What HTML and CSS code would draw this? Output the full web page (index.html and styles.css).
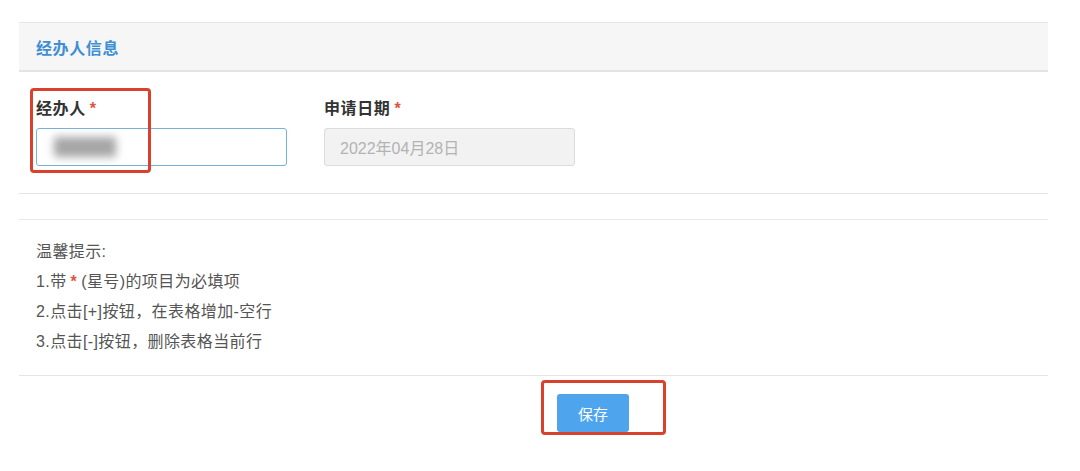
FILE: index.html
```html
<!DOCTYPE html>
<html lang="zh">
<head>
<meta charset="utf-8">
<title>经办人信息</title>
<link rel="stylesheet" href="styles.css">
</head>
<body>
<div class="page">
  <section class="panel">
    <div class="panel-head">经办人信息</div>
    <div class="panel-body">
      <div class="field">
        <div class="label">经办人<span class="req">*</span></div>
        <div class="input active"><span class="masked"></span></div>
        <div class="mark mark-field"></div>
      </div>
      <div class="field">
        <div class="label">申请日期<span class="req">*</span></div>
        <div class="input disabled">2022年04月28日</div>
      </div>
    </div>
  </section>

  <section class="tips">
    <p>温馨提示:</p>
    <p>1.带<span class="req">*</span>(星号)的项目为必填项</p>
    <p>2.点击[+]按钮，在表格增加-空行</p>
    <p>3.点击[-]按钮，删除表格当前行</p>
  </section>

  <div class="actions">
    <button class="btn-save">保存</button>
    <div class="mark mark-btn"></div>
  </div>
</div>
</body>
</html>
```

FILE: styles.css
```css
* { box-sizing: border-box; }
html, body {
  margin: 0;
  background: #ffffff;
  font-family: "Liberation Sans", "Noto Sans CJK SC", sans-serif;
  color: #333;
}
.page {
  padding: 22px 32px 0 19px;
}
.panel {
  border-top: 1px solid #e6e6e6;
  border-bottom: 1px solid #e4e4e4;
}
.panel-head {
  height: 49px;
  background: #f6f6f6;
  border-bottom: 2px solid #e3e3e3;
  padding-left: 17px;
  display: flex;
  align-items: center;
  font-size: 16px;
  font-weight: bold;
  letter-spacing: 0.6px;
  color: #3f8fd4;
}
.panel-body {
  display: flex;
  gap: 37px;
  padding: 27px 17px 27px;
}
.field {
  position: relative;
  width: 251px;
}
.label {
  font-size: 16px;
  line-height: 20px;
  font-weight: bold;
  color: #333;
  letter-spacing: 0.6px;
  margin-bottom: 9px;
}
.req {
  color: #e0533f;
  margin-left: 4px;
  font-weight: bold;
}
.input {
  height: 38px;
  border-radius: 3px;
  display: flex;
  align-items: center;
  padding-left: 15px;
  font-size: 16px;
}
.input.active {
  border: 1px solid #76b3d9;
  background: #fff;
}
.input.disabled {
  border: 1px solid #dcdcdc;
  background: #f2f2f2;
  color: #b3b3b3;
}
.masked {
  display: block;
  width: 62px;
  height: 20px;
  margin-left: 2px;
  background: #a6a6a6;
  filter: blur(4px);
}
.mark {
  position: absolute;
  border: 3px solid #d8412b;
  border-radius: 4px;
  pointer-events: none;
}
.mark-field {
  left: -6px;
  top: -11px;
  width: 121px;
  height: 85px;
}
.tips {
  margin-top: 25px;
  border-top: 1px solid #e8e8e8;
  border-bottom: 1px solid #e4e4e4;
  padding: 17px 17px 18px;
  font-size: 16px;
  letter-spacing: 0.4px;
  line-height: 30px;
  color: #555;
}
.tips p { margin: 0; }
.tips .req { margin: 0 4px 0 4px; }
.actions {
  position: relative;
  padding: 18px 0 40px 538px;
}
.btn-save {
  width: 72px;
  height: 38px;
  border: none;
  border-radius: 3px;
  background: #4ea5ee;
  color: #fff;
  font-family: inherit;
  font-size: 15px;
  padding: 0;
}
.mark-btn {
  left: 522px;
  top: 4px;
  width: 125px;
  height: 55px;
}
```
